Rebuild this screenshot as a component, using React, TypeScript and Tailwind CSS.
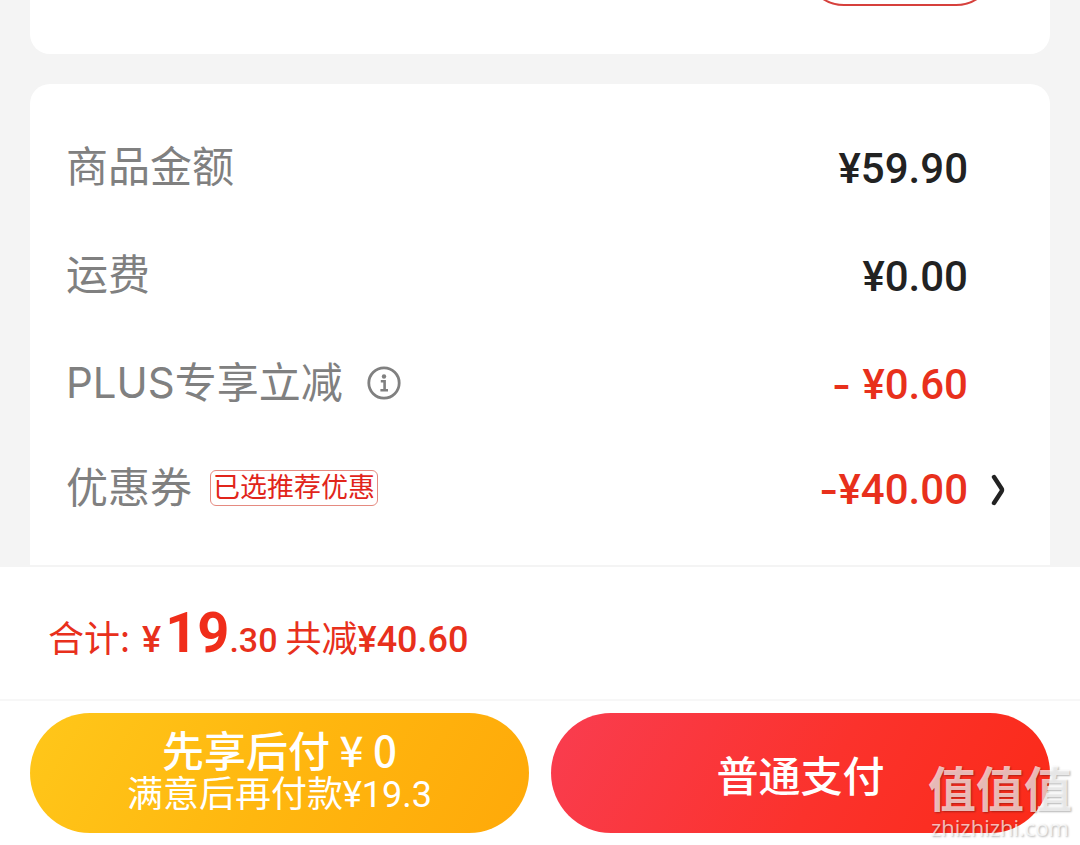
import type { ReactNode } from "react";

type PriceRow = {
	label: string;
	amount: string;
	/** 减免金额前的负号 */
	sign?: string;
	extra?: ReactNode;
	expandable?: boolean;
};

/** 圆圈里的说明图标 */
function InfoIcon() {
	return (
		<svg viewBox="0 0 34 34" className="size-[34px]" fill="none" aria-hidden="true">
			<circle cx="17" cy="17" r="15.2" stroke="currentColor" strokeWidth="2.8" />
			<circle cx="17" cy="10.5" r="2.2" fill="currentColor" />
			<path d="M13.8 15.2H17.6V24M13.4 24.2H21" stroke="currentColor" strokeWidth="2.6" />
		</svg>
	);
}

const rows: PriceRow[] = [
	{ label: "商品金额", amount: "¥59.90" },
	{ label: "运费", amount: "¥0.00" },
	{
		label: "PLUS专享立减",
		amount: "¥0.60",
		sign: "- ",
		extra: (
			<button type="button" aria-label="PLUS专享立减说明" className="ml-6">
				<InfoIcon />
			</button>
		),
	},
	{
		label: "优惠券",
		amount: "¥40.00",
		sign: "-",
		expandable: true,
		extra: (
			<span className="ml-[18px] rounded-md border border-[#e58a80] px-[2px] text-[27px] leading-[34px] text-[#e1251b]">
				已选推荐优惠
			</span>
		),
	},
];

/** 金额明细的一行 */
function PriceLine({ label, amount, sign, extra, expandable }: PriceRow) {
	return (
		<div className="flex h-[108px] items-center last:h-[102px]">
			<dt className="flex items-center pb-1 font-['Inter','Noto_Sans_CJK_SC',sans-serif] text-[42px] leading-none text-[#808080]">
				{label}
				{extra}
			</dt>
			<dd
				className={`ml-auto flex items-center font-['Roboto',sans-serif] text-[42px] leading-none font-medium whitespace-pre ${
					sign ? "text-[#e8301c]" : "text-[#222]"
				}`}
			>
				{sign && <span className="font-['Inter',sans-serif]">{sign}</span>}
				{amount}
				<span className="flex w-[46px] justify-end pr-2">
					{expandable && (
						<button type="button" aria-label="选择优惠券" className="text-[#222]">
							<svg viewBox="0 0 16 32" className="h-8 w-4" fill="none" aria-hidden="true">
								<path
									d="M4 3L11.5 14.5Q12.5 16 11.5 17.5L4 29"
									stroke="currentColor"
									strokeWidth="4.4"
									strokeLinecap="round"
									strokeLinejoin="round"
								/>
							</svg>
						</button>
					)}
				</span>
			</dd>
		</div>
	);
}

/** 右下角的站点水印 */
function Watermark() {
	return (
		<div className="pointer-events-none absolute right-2 bottom-1 text-center text-white/70 [text-shadow:1px_1px_2px_rgb(0_0_0/0.3)]">
			<p className="text-[48px] leading-[54px] font-bold">值值值</p>
			<p className="font-['Open_Sans',sans-serif] text-[22px] leading-7 font-medium">zhizhizhi.com</p>
		</div>
	);
}

export default function App() {
	return (
		<div className="relative flex min-h-screen flex-col bg-[#f4f4f4] font-['Noto_Sans_CJK_SC',sans-serif]">
			<main className="flex grow flex-col gap-[30px] px-[30px]">
				<section className="rounded-b-[20px] bg-white pr-[54px] pb-12">
					<div className="flex h-1.5 items-end justify-end overflow-hidden">
						<button
							type="button"
							aria-label="更多"
							className="h-20 w-48 shrink-0 rounded-full border-2 border-[#d6403c]"
						/>
					</div>
				</section>
				<section className="grow rounded-t-[20px] bg-white px-9 pt-[31px] pb-5">
					<dl>
						{rows.map((row) => (
							<PriceLine key={row.label} {...row} />
						))}
					</dl>
				</section>
			</main>

			<footer className="border-t-2 border-[#f4f4f4] bg-white text-[#e8301c]">
				<div className="flex h-[132px] items-center px-12">
					<p className="flex items-baseline text-[36px] leading-none">
						合计:
						<span className="ml-3 font-['Roboto',sans-serif] font-medium">¥</span>
						<strong className="ml-1 font-['Roboto',sans-serif] text-[56px] leading-none font-bold text-[#f02d1a]">
							19
						</strong>
						<span className="font-['Roboto',sans-serif] text-[34px] font-medium">.30</span>
						<span className="ml-2">共减</span>
						<span className="font-['Roboto',sans-serif] font-medium">¥40.60</span>
					</p>
				</div>
				<div className="grid grid-cols-2 gap-[22px] border-t-2 border-[#f7f7f7] px-[30px] py-3 text-white">
					<button
						type="button"
						className="flex h-[120px] flex-col items-center justify-center rounded-full bg-linear-[120deg,#ffc71a,#ffb70f_50%,#ffa909]"
					>
						<span className="text-[42px] leading-[44px] font-medium">先享后付 ¥ 0</span>
						<span className="font-['Roboto','Noto_Sans_CJK_SC',sans-serif] text-[36px] leading-[48px]">
							满意后再付款¥19.3
						</span>
					</button>
					<button
						type="button"
						className="h-[120px] rounded-full bg-linear-[120deg,#f93d50,#fb322c_55%,#fb2a18] text-[42px] font-medium"
					>
						普通支付
					</button>
				</div>
			</footer>
			<Watermark />
		</div>
	);
}
